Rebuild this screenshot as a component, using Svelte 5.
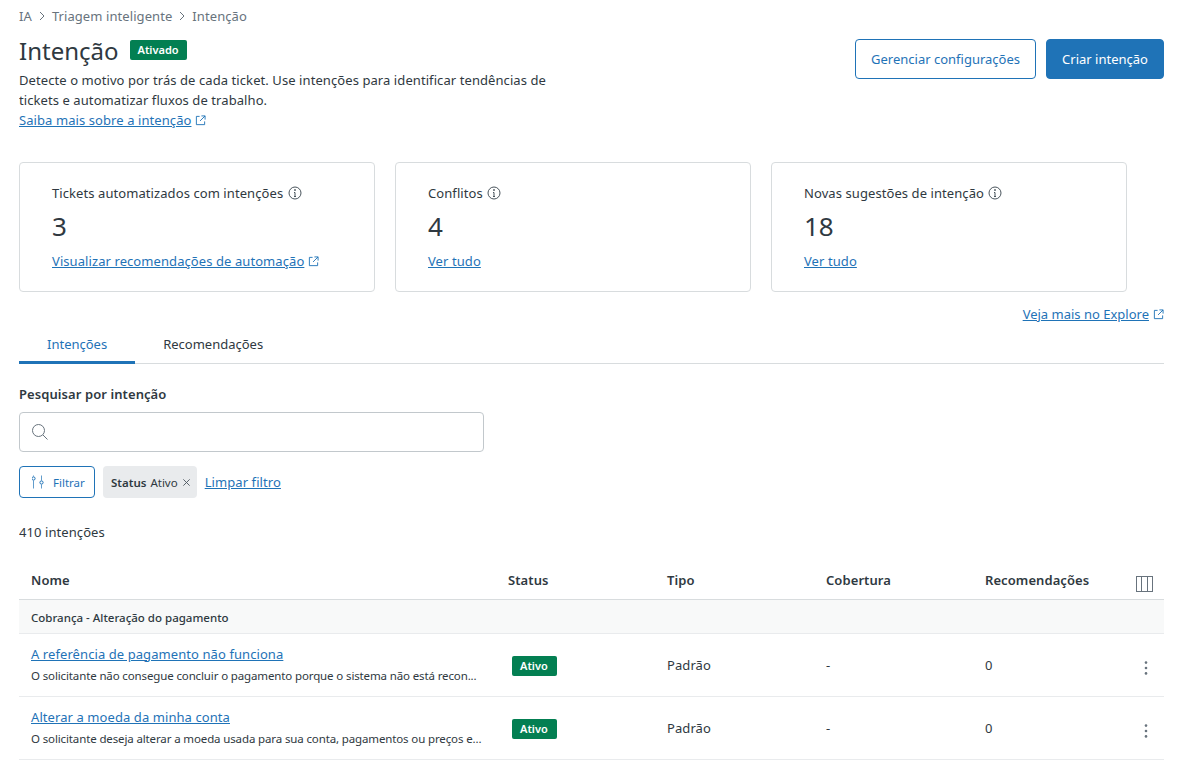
<script lang="ts">
  const cards = [
    { label: "Tickets automatizados com intenções", value: "3", link: "Visualizar recomendações de automação", external: true },
    { label: "Conflitos", value: "4", link: "Ver tudo", external: false },
    { label: "Novas sugestões de intenção", value: "18", link: "Ver tudo", external: false },
  ];

  const rows = [
    {
      name: "A referência de pagamento não funciona",
      desc: "O solicitante não consegue concluir o pagamento porque o sistema não está recon...",
    },
    {
      name: "Alterar a moeda da minha conta",
      desc: "O solicitante deseja alterar a moeda usada para sua conta, pagamentos ou preços e...",
    },
  ];
</script>

{#snippet externalIcon()}
  <svg class="ext" width="11" height="11" viewBox="0 0 12 12" fill="none" stroke="currentColor">
    <path d="M5 1.5H1.5v9h9V7M7 1H11V5M11 1L5.5 6.5" />
  </svg>
{/snippet}

<div class="page">
  <nav class="crumbs">
    <span>IA</span>
    <svg width="12" height="12" viewBox="0 0 12 12" fill="none" stroke="#68737d"><path d="M4 2l4 4-4 4" /></svg>
    <span>Triagem inteligente</span>
    <svg width="12" height="12" viewBox="0 0 12 12" fill="none" stroke="#68737d"><path d="M4 2l4 4-4 4" /></svg>
    <span>Intenção</span>
  </nav>

  <header class="head">
    <div class="head-text">
      <div class="title-row">
        <h1>Intenção</h1>
        <span class="tag">Ativado</span>
      </div>
      <p>Detecte o motivo por trás de cada ticket. Use intenções para identificar tendências de tickets e automatizar fluxos de trabalho.</p>
      <div class="learn"><a href="#top" class="link">Saiba mais sobre a intenção</a>{@render externalIcon()}</div>
    </div>
    <div class="actions">
      <button class="btn">Gerenciar configurações</button>
      <button class="btn primary">Criar intenção</button>
    </div>
  </header>

  <section class="cards">
    {#each cards as card}
      <div class="card">
        <div class="card-label">
          {card.label}
          <svg class="info" width="14" height="14" viewBox="0 0 14 14" fill="none" stroke="#49545c">
            <circle cx="7" cy="7" r="6" />
            <path d="M7 6.5V10.5M6 6.5h1M6 10.5h2" />
            <circle cx="7" cy="4" r="0.5" fill="#49545c" />
          </svg>
        </div>
        <div class="card-value">{card.value}</div>
        <div><a href="#top" class="link">{card.link}</a>{#if card.external}{@render externalIcon()}{/if}</div>
      </div>
    {/each}
  </section>

  <div class="explore">
    <a href="#top" class="link">Veja mais no Explore</a>{@render externalIcon()}
  </div>

  <div class="tabs">
    <div class="tab active">Intenções</div>
    <div class="tab">Recomendações</div>
  </div>

  <label class="search-label" for="search">Pesquisar por intenção</label>
  <div class="search">
    <svg width="16" height="16" viewBox="0 0 16 16" fill="none" stroke="#68737d">
      <circle cx="6.5" cy="6.5" r="6" />
      <path d="M11 11l4.5 4.5" />
    </svg>
    <input id="search" type="text" />
  </div>

  <div class="filters">
    <button class="filter-btn">
      <svg width="12" height="14" viewBox="0 0 12 14" fill="none" stroke="#1f73b7">
        <path d="M1.5 0.5V1.5M1.5 5.5V13.5M9.5 0.5V5.5M9.5 9.5V13.5" opacity="0.7" />
        <circle cx="1.5" cy="3.5" r="1.6" />
        <circle cx="9.5" cy="7.5" r="1.6" />
      </svg>
      Filtrar
    </button>
    <span class="chip">
      <b>Status</b> Ativo
      <svg width="9" height="9" viewBox="0 0 10 10" fill="none" stroke="#49545c"><path d="M1.5 1.5l7 7M8.5 1.5l-7 7" /></svg>
    </span>
    <a href="#top" class="link clear">Limpar filtro</a>
  </div>

  <div class="count">410 intenções</div>

  <div class="table">
    <div class="row head-row">
      <div class="cell">Nome</div>
      <div class="cell">Status</div>
      <div class="cell">Tipo</div>
      <div class="cell">Cobertura</div>
      <div class="cell">Recomendações</div>
      <div class="cell col-icon">
        <svg width="17" height="16" viewBox="0 0 17 16" fill="none" stroke="#68737d">
          <rect x="0.5" y="0.5" width="16" height="15" />
          <path d="M5.5 0.5v15M11.5 0.5v15" />
        </svg>
      </div>
    </div>
    <div class="group">Cobrança - Alteração do pagamento</div>
    {#each rows as row}
      <div class="row body-row">
        <div class="cell name-cell">
          <a href="#top" class="link">{row.name}</a>
          <div class="desc">{row.desc}</div>
        </div>
        <div class="cell"><span class="tag small">Ativo</span></div>
        <div class="cell">Padrão</div>
        <div class="cell">-</div>
        <div class="cell">0</div>
        <div class="cell col-icon">
          <svg width="4" height="14" viewBox="0 0 4 14" fill="#68737d">
            <circle cx="2" cy="1.6" r="1.3" />
            <circle cx="2" cy="7" r="1.3" />
            <circle cx="2" cy="12.4" r="1.3" />
          </svg>
        </div>
      </div>
    {/each}
  </div>
</div>

<style>
  :global(body) {
    background: #fff;
  }

  .page {
    width: 1145px;
    height: 770px;
    overflow: hidden;
    box-sizing: border-box;
    margin-left: 19px;
    padding-top: 6px;
    font-family: "Noto Sans", "Open Sans", sans-serif;
    font-size: 13px;
    letter-spacing: 0.08px;
    color: #2f3941;
  }

  .crumbs {
    display: flex;
    align-items: center;
    gap: 4px;
    height: 20px;
    color: #68737d;
  }

  .head {
    display: flex;
    justify-content: space-between;
    margin-top: 8px;
  }

  .head-text {
    width: 540px;
  }

  .title-row {
    display: flex;
    align-items: center;
    gap: 11px;
    height: 36px;
  }

  h1 {
    margin: 0 0 2px;
    font-size: 24px;
    font-weight: 400;
    line-height: 36px;
    letter-spacing: 0;
  }

  .tag {
    background: #037f52;
    color: #fff;
    font-size: 11px;
    font-weight: 600;
    letter-spacing: 0;
    border-radius: 2px;
    padding: 0 8px;
    line-height: 20px;
    height: 20px;
    display: inline-block;
    margin-bottom: 4px;
  }

  .tag.small {
    display: block;
    width: 29px;
    margin: 2px 0 0 4px;
  }

  p {
    margin: 0;
    line-height: 20px;
  }

  .learn {
    line-height: 20px;
  }

  .link {
    color: #1f73b7;
    text-decoration: underline;
  }

  .ext {
    color: #1f73b7;
    margin-left: 4px;
    vertical-align: -1px;
  }

  .actions {
    display: flex;
    gap: 10px;
    margin-top: 5px;
  }

  .btn {
    width: 181px;
    height: 40px;
    border: 1px solid #1f73b7;
    border-radius: 4px;
    background: #fff;
    color: #1f73b7;
    font: inherit;
  }

  .btn.primary {
    width: 118px;
    background: #1f73b7;
    color: #fff;
  }

  .cards {
    display: flex;
    gap: 20px;
    margin-top: 32px;
  }

  .card {
    width: 356px;
    height: 130px;
    box-sizing: border-box;
    border: 1px solid #d8dcde;
    border-radius: 4px;
    padding: 20px 32px;
    line-height: 20px;
  }

  .info {
    margin-left: 1px;
    vertical-align: -2px;
  }

  .card-value {
    font-size: 26px;
    line-height: 32px;
    margin: 7px 0 9px;
    letter-spacing: 0;
  }

  .explore {
    text-align: right;
    margin-top: 12px;
    line-height: 20px;
    letter-spacing: 0;
  }

  .tabs {
    display: flex;
    height: 40px;
    border-bottom: 1px solid #d8dcde;
    box-sizing: border-box;
    letter-spacing: 0;
  }

  .tab {
    padding: 10px 28px 0;
    line-height: 20px;
    margin-bottom: -1px;
  }

  .tab.active {
    color: #1f73b7;
    border-bottom: 3px solid #1f73b7;
    box-sizing: border-box;
  }

  .search-label {
    display: block;
    margin-top: 20px;
    font-weight: 600;
    line-height: 20px;
  }

  .search {
    display: flex;
    align-items: center;
    gap: 8px;
    width: 465px;
    height: 40px;
    box-sizing: border-box;
    margin-top: 8px;
    padding: 0 12px;
    border: 1px solid #c2c8cc;
    border-radius: 4px;
  }

  .search input {
    flex: 1;
    border: none;
    outline: none;
    font: inherit;
    min-width: 0;
  }

  .filters {
    display: flex;
    align-items: center;
    gap: 8px;
    margin-top: 14px;
    height: 32px;
  }

  .filter-btn {
    display: flex;
    align-items: center;
    gap: 9px;
    width: 76px;
    height: 32px;
    box-sizing: border-box;
    padding: 0 0 0 12px;
    background: #fff;
    border: 1px solid #1f73b7;
    border-radius: 4px;
    color: #1f73b7;
    font: inherit;
    font-size: 11.5px;
    letter-spacing: 0;
  }

  .chip {
    display: flex;
    align-items: center;
    gap: 4px;
    height: 32px;
    box-sizing: border-box;
    padding: 0 6px 0 8px;
    background: #e9ebed;
    border-radius: 4px;
    font-size: 11.5px;
    letter-spacing: 0;
  }

  .chip b {
    font-weight: 600;
  }

  .count {
    margin-top: 24px;
    line-height: 20px;
  }

  .table {
    margin-top: 18px;
  }

  .row {
    display: grid;
    grid-template-columns: 477px 159px 159px 159px 159px 32px;
    align-items: center;
    border-bottom: 1px solid #e9ebed;
  }

  .cell {
    padding-left: 12px;
    min-width: 0;
  }

  .head-row {
    height: 40px;
    box-sizing: border-box;
    font-weight: 600;
    border-bottom: 1px solid #d8dcde;
  }

  .col-icon {
    padding-left: 4px;
  }

  .col-icon svg {
    display: block;
  }

  .head-row .col-icon svg {
    margin-top: 8px;
  }

  .group {
    height: 34px;
    box-sizing: border-box;
    padding-left: 12px;
    font-size: 11.5px;
    font-weight: 500;
    letter-spacing: 0;
    line-height: 35px;
    background: #f8f9f9;
    border-bottom: 1px solid #e9ebed;
  }

  .body-row {
    height: 63px;
    box-sizing: border-box;
  }

  .body-row .col-icon {
    padding-left: 12px;
  }

  .body-row .col-icon svg {
    margin-top: 5px;
  }

  .name-cell {
    line-height: 20px;
    margin-top: -1px;
  }

  .desc {
    margin-top: 2px;
    font-size: 11.5px;
    letter-spacing: -0.13px;
    line-height: 20px;
    white-space: nowrap;
  }
</style>
